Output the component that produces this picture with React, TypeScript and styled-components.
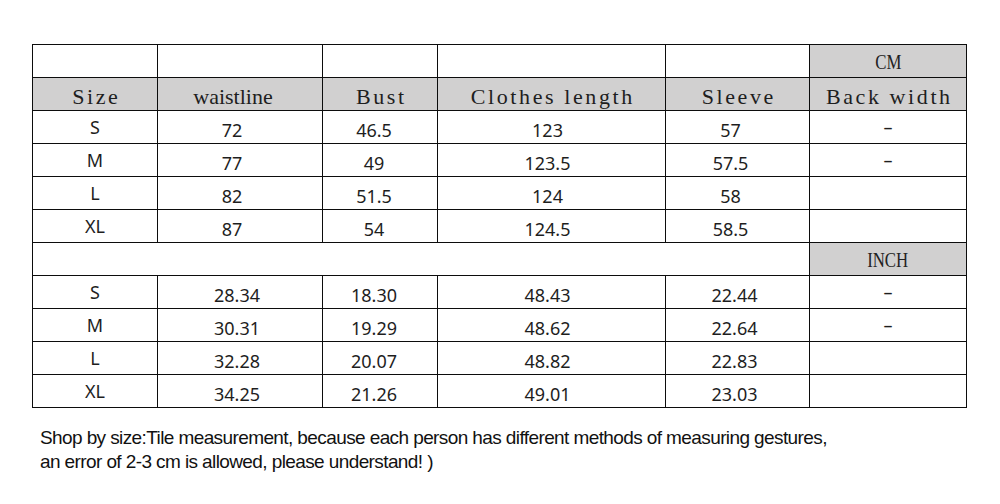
import React from "react";
import styled, { createGlobalStyle } from "styled-components";

const GlobalStyle = createGlobalStyle`
  html, body {
    margin: 0;
    padding: 0;
    background: #ffffff;
  }
`;

const Page = styled.div`
  width: 1000px;
  height: 504px;
  padding: 44px 0 0 32px;
  box-sizing: border-box;
  background: #fff;
`;

const Table = styled.table`
  border-collapse: collapse;
  table-layout: fixed;
  width: 934px;
`;

const Row = styled.tr`
  height: 33px;
`;

type Face = "sans" | "mono" | "serif" | "narrow";

const Cell = styled.td<{ shade?: boolean; face?: Face; drop?: number; shift?: number }>`
  border: 1px solid #0c0c0c;
  padding: ${(p) => p.drop ?? 0}px ${(p) => p.shift ?? 0}px 0 0;
  height: 32px;
  box-sizing: border-box;
  text-align: center;
  vertical-align: middle;
  background: ${(p) => (p.shade ? "#d1d0d0" : "#fff")};
  color: #1e1e1e;
  line-height: 1;
  white-space: nowrap;
  font-family: ${(p) =>
    p.face === "mono" || p.face === "serif" || p.face === "narrow"
      ? `"Liberation Serif", serif`
      : `"Noto Sans", "Liberation Sans", sans-serif`};
  font-size: ${(p) => (p.face === "sans" || !p.face ? "18px" : p.face === "narrow" ? "21px" : "22px")};
  letter-spacing: ${(p) => (p.face === "mono" ? "2.6px" : "0")};
  text-indent: ${(p) => (p.face === "mono" ? "2.6px" : "0")};
  font-weight: normal;
`;

const Narrow = styled.span`
  display: inline-block;
  transform: scaleX(0.8);
  color: #222;
`;

const Note = styled.p`
  margin: 18px 0 0 8px;
  font-family: "Liberation Sans", Arial, sans-serif;
  font-size: 19px;
  line-height: 24px;
  color: #111;
  letter-spacing: -0.6px;
`;

const widths = [125, 165, 115, 228, 144, 157];

const cm = [
  ["S", "72", "46.5", "123", "57", "–"],
  ["M", "77", "49", "123.5", "57.5", "–"],
  ["L", "82", "51.5", "124", "58", ""],
  ["XL", "87", "54", "124.5", "58.5", ""],
];

const inch = [
  ["S", "28.34", "18.30", "48.43", "22.44", "–"],
  ["M", "30.31", "19.29", "48.62", "22.64", "–"],
  ["L", "32.28", "20.07", "48.82", "22.83", ""],
  ["XL", "34.25", "21.26", "49.01", "23.03", ""],
];

const headers = ["Size", "waistline", "Bust", "Clothes length", "Sleeve", "Back width"];

const DataRows = ({ rows, shifts }: { rows: string[][]; shifts: number[] }) => (
  <>
    {rows.map((r) => (
      <Row key={r[0] + r[1]}>
        {r.map((v, i) => (
          <Cell key={i} drop={i === 0 || i === 5 ? 0 : 6} shift={shifts[i]}>
            {v}
          </Cell>
        ))}
      </Row>
    ))}
  </>
);

export default function App() {
  return (
    <Page>
      <GlobalStyle />
      <Table>
        <colgroup>
          {widths.map((w, i) => (
            <col key={i} style={{ width: w }} />
          ))}
        </colgroup>
        <tbody>
          <Row>
            <Cell />
            <Cell />
            <Cell />
            <Cell />
            <Cell />
            <Cell shade face="narrow" drop={3}>
              <Narrow>CM</Narrow>
            </Cell>
          </Row>
          <Row>
            {headers.map((h) => (
              <Cell
                key={h}
                shade
                face={h === "waistline" ? "serif" : "mono"}
                drop={6}
                shift={h === "waistline" ? 14 : 0}
              >
                {h}
              </Cell>
            ))}
          </Row>
          <DataRows rows={cm} shifts={[0, 16, 12, 8, 14, -6]} />
          <Row>
            <Cell colSpan={5} />
            <Cell shade face="narrow" drop={3}>
              <Narrow>INCH</Narrow>
            </Cell>
          </Row>
          <DataRows rows={inch} shifts={[0, 6, 12, 8, 6, -6]} />
        </tbody>
      </Table>
      <Note>
        Shop by size:Tile measurement, because each person has different methods of measuring gestures,
        <br />
        an error of 2-3 cm is allowed, please understand! )
      </Note>
    </Page>
  );
}
